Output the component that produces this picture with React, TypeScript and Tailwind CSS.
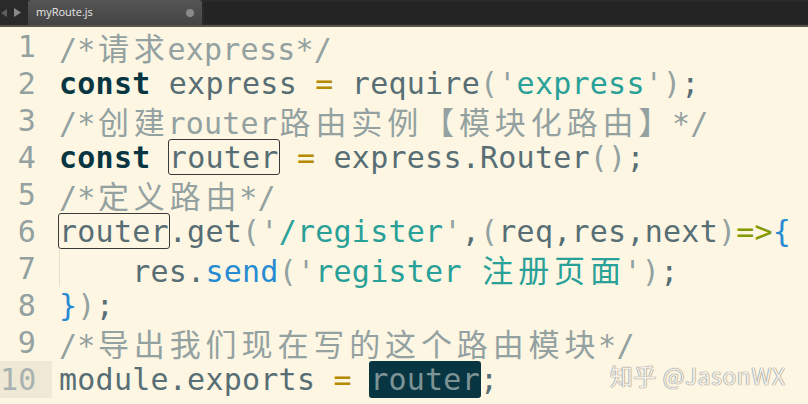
import React from 'react';

type Tok = { t: string; c?: string };

const MONO = "font-['DejaVu_Sans_Mono','Liberation_Mono',monospace]";

const C = {
  plain: 'text-[#586e75]',
  kw: 'text-[#073642] font-bold',
  cm: 'text-[#93a1a1]',
  str: 'text-[#2aa198]',
  op: 'text-[#b58900]',
  arrow: 'text-[#859900]',
  blue: 'text-[#268bd2]',
  paren: 'text-[#93a1a1]',
};

const isCJK = (ch: string) => /[\u3000-\u9fff\uff00-\uffef]/.test(ch);

// CJK characters take two cells, like in the editor
const Text: React.FC<{ text: string; className?: string }> = ({ text, className }) => {
  const parts: React.ReactNode[] = [];
  let buf = '';
  Array.from(text).forEach((ch, i) => {
    if (isCJK(ch)) {
      if (buf) parts.push(buf);
      buf = '';
      parts.push(
        <span
          key={i}
          className="inline-block w-[35.9px] text-center font-['Noto_Sans_CJK_SC',sans-serif] text-[31px] font-normal"
        >
          {ch}
        </span>
      );
    } else buf += ch;
  });
  if (buf) parts.push(buf);
  return <span className={className}>{parts}</span>;
};

const lines: (Tok | { box: string } | { sel: string })[][] = [
  [{ t: '/*请求express*/', c: C.cm }],
  [
    { t: 'const', c: C.kw },
    { t: ' express ' },
    { t: '=', c: C.op },
    { t: ' require' },
    { t: '(', c: C.paren },
    { t: "'", c: C.paren },
    { t: 'express', c: C.str },
    { t: "'", c: C.paren },
    { t: ')', c: C.paren },
    { t: ';' },
  ],
  [{ t: '/*创建router路由实例【模块化路由】*/', c: C.cm }],
  [
    { t: 'const', c: C.kw },
    { t: ' ' },
    { box: 'router' },
    { t: ' ' },
    { t: '=', c: C.op },
    { t: ' express.Router' },
    { t: '()', c: C.paren },
    { t: ';' },
  ],
  [{ t: '/*定义路由*/', c: C.cm }],
  [
    { box: 'router' },
    { t: '.get' },
    { t: '(', c: C.paren },
    { t: "'", c: C.paren },
    { t: '/register', c: C.str },
    { t: "'", c: C.paren },
    { t: ',' },
    { t: '(', c: C.paren },
    { t: 'req,res,next' },
    { t: ')', c: C.paren },
    { t: '=>', c: C.arrow },
    { t: '{', c: C.blue },
  ],
  [
    { t: '    res.' },
    { t: 'send', c: C.blue },
    { t: '(', c: C.paren },
    { t: "'", c: C.paren },
    { t: 'register 注册页面', c: C.str },
    { t: "'", c: C.paren },
    { t: ')', c: C.paren },
    { t: ';' },
  ],
  [{ t: '}', c: C.blue }, { t: ')', c: C.paren }, { t: ';' }],
  [{ t: '/*导出我们现在写的这个路由模块*/', c: C.cm }],
  [{ t: 'module.exports ' }, { t: '=', c: C.op }, { t: ' ' }, { sel: 'router' }, { t: ';' }],
];

const App: React.FC = () => {
  return (
    <div className="relative w-[808px] h-[404px] overflow-hidden bg-[#fdf6e3]">
      {/* tab bar */}
      <div className="flex h-[27px] bg-[#2a2a2a] border-b-2 border-[#5a5546]">
        <div className="flex items-center gap-[7px] w-[28px] pl-[1px]">
          <svg width="6" height="8" viewBox="0 0 6 8">
            <path d="M6 0 L0 4 L6 8 Z" fill="#5f5f5f" />
          </svg>
          <svg width="7" height="9" viewBox="0 0 7 9">
            <path d="M0 0 L7 4.5 L0 9 Z" fill="#8a8a8a" />
          </svg>
        </div>
        <div className="flex items-center justify-between w-[174px] h-[25px] bg-gradient-to-b from-[#555] to-[#444] rounded-t-[3px] pl-[8px] pr-[8px]">
          <span className="font-['Open_Sans',sans-serif] text-[11px] text-[#e8e8e8]">myRoute.js</span>
          <span className="w-[8px] h-[8px] rounded-full bg-[#8a8a8a]" />
        </div>
        <div className="flex-1 mt-[2px] ml-[2px] h-[22px] bg-[#242424] rounded-tl-[3px]" />
      </div>

      {/* editor */}
      <div className={`pt-[1px] ${MONO} text-[30px] tracking-[0.24px]`}>
        {lines.map((toks, i) => {
          const n = i + 1;
          const current = n === 10;
          return (
            <div key={i} className="flex h-[37px] leading-[37px] whitespace-pre">
              <div
                className={`w-[52px] pr-[16px] text-right text-[#93a1a1] ${current ? 'bg-[#eee8d5] text-[#a9b2b0]' : ''}`}
              >
                {n}
              </div>
              <div className={`relative pl-[7px] ${C.plain}`}>
                {n === 7 && <span className="absolute left-[7px] top-0 h-full w-px bg-[#e6dfcc]" />}
                {toks.map((tok, j) => {
                  if ('box' in tok)
                    return (
                      <span
                        key={j}
                        className="inline-block h-[36px] leading-[36px] border border-[#3a3a3a] rounded-[3px] -mx-px"
                      >
                        {tok.box}
                      </span>
                    );
                  if ('sel' in tok)
                    return (
                      <span
                        key={j}
                        className="inline-block h-[37px] bg-[#073642] text-[#7e9395] rounded-[3px] px-px -mx-px"
                      >
                        {tok.sel}
                      </span>
                    );
                  return <Text key={j} text={tok.t} className={tok.c} />;
                })}
              </div>
            </div>
          );
        })}
      </div>

      {/* watermark */}
      <div className="absolute left-[610px] top-[358px] font-['Noto_Sans_CJK_SC',sans-serif] text-[23px] tracking-[0.5px] text-[#f3eee6] [text-shadow:0_0_1px_#7a7a7a,0_0_1px_#7a7a7a]">
        知乎 @JasonWX
      </div>
    </div>
  );
};

export default App;
